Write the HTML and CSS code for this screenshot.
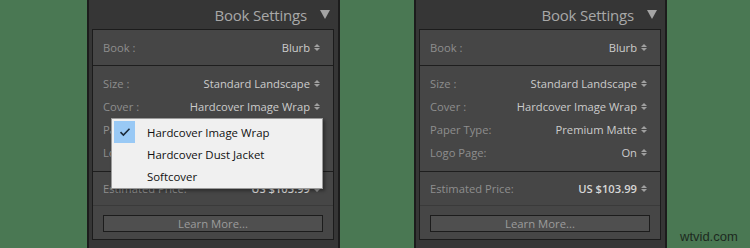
FILE: index.html
```html
<!DOCTYPE html>
<html lang="en">
<head>
  <meta charset="UTF-8" />
  <title>Book Settings</title>
  <link rel="stylesheet" href="styles.css">
</head>
<body>

<div class="stage">
  <section class="panel">
    <div class="head">
      <span class="title">Book Settings</span>
      <span class="tri"></span>
    </div>
    <div class="box">
      <div class="group first">
        <div class="row"><span class="label">Book :</span><span class="value">Blurb<i class="updown"></i></span></div>
      </div>
      <div class="group mid">
        <div class="row"><span class="label">Size :</span><span class="value">Standard Landscape<i class="updown"></i></span></div>
        <div class="row"><span class="label">Cover :</span><span class="value">Hardcover Image Wrap<i class="updown"></i></span></div>
        <div class="row"><span class="label">Paper Type:</span><span class="value">Premium Matte<i class="updown"></i></span></div>
        <div class="row"><span class="label">Logo Page:</span><span class="value">On<i class="updown"></i></span></div>
      </div>
      <div class="group price">
        <div class="row"><span class="label">Estimated Price:</span><span class="value strong">US $103.99<i class="updown"></i></span></div>
      </div>
      <div class="learn"><button>Learn More...</button></div>
    </div>

    <ul class="menu">
      <li class="checked"><span class="check"><svg width="12" height="10" viewBox="0 0 12 10"><path d="M1.5 5.2 L4.4 8 L10.5 1.8" fill="none" stroke="#1b2a3a" stroke-width="1.6"/></svg></span>Hardcover Image Wrap</li>
      <li><span class="check"></span>Hardcover Dust Jacket</li>
      <li><span class="check"></span>Softcover</li>
    </ul>
  </section>

  <section class="panel">
    <div class="head">
      <span class="title">Book Settings</span>
      <span class="tri"></span>
    </div>
    <div class="box">
      <div class="group first">
        <div class="row"><span class="label">Book :</span><span class="value">Blurb<i class="updown"></i></span></div>
      </div>
      <div class="group mid">
        <div class="row"><span class="label">Size :</span><span class="value">Standard Landscape<i class="updown"></i></span></div>
        <div class="row"><span class="label">Cover :</span><span class="value">Hardcover Image Wrap<i class="updown"></i></span></div>
        <div class="row"><span class="label">Paper Type:</span><span class="value">Premium Matte<i class="updown"></i></span></div>
        <div class="row"><span class="label">Logo Page:</span><span class="value">On<i class="updown"></i></span></div>
      </div>
      <div class="group price">
        <div class="row"><span class="label">Estimated Price:</span><span class="value strong">US $103.99<i class="updown"></i></span></div>
      </div>
      <div class="learn"><button>Learn More...</button></div>
    </div>
  </section>
</div>

<div class="mark">wtvid.com</div>

</body>
</html>
```

FILE: styles.css
```css
* {
  box-sizing: border-box;
}

body {
  margin: 0;
  width: 750px;
  height: 248px;
  overflow: hidden;
  background: #4a7853;
  font-family: 'Open Sans', 'Noto Sans', sans-serif;
  position: relative;
}

.stage {
  display: flex;
  gap: 74px;
  padding-left: 87px;
}

.panel {
  position: relative;
  width: 253px;
  height: 248px;
  background: #363636;
  border-left: 2px solid #1c1c1c;
  border-right: 2px solid #1c1c1c;
  padding: 0 4px 0 3px;
}

.head {
  height: 29px;
  display: flex;
  justify-content: flex-end;
  align-items: center;
  padding-right: 4px;
}

.title {
  font-size: 15px;
  color: #a8a8a8;
  letter-spacing: -0.2px;
}

.tri {
  width: 0;
  height: 0;
  margin-left: 13px;
  border-left: 5px solid transparent;
  border-right: 5px solid transparent;
  border-top: 9px solid #a4a4a4;
}

.box {
  background: #464646;
  border: 1px solid #1c1c1c;
}

.group {
  border-bottom: 1px solid #1e1e1e;
}

.group.first {
  height: 36px;
  padding-top: 6px;
}

.group.mid {
  height: 106px;
  padding-top: 6px;
}

.group.price {
  height: 34px;
  padding-top: 5px;
  border-bottom-color: #3a3a3a;
}

.row {
  height: 23px;
  display: flex;
  justify-content: space-between;
  align-items: center;
  padding: 0 13px 0 10px;
  font-size: 11.2px;
}

.label {
  color: #8e8e8e;
}

.value {
  color: #cccccc;
  display: flex;
  align-items: center;
}

.value.strong {
  color: #d6d6d6;
  font-weight: 600;
}

.updown {
  display: inline-flex;
  flex-direction: column;
  gap: 1px;
  margin-left: 4px;
}

.updown::before,
.updown::after {
  content: "";
  border-left: 3px solid transparent;
  border-right: 3px solid transparent;
}

.updown::before {
  border-bottom: 3px solid #a0a0a0;
}

.updown::after {
  border-top: 3px solid #a0a0a0;
}

.learn {
  padding: 9px 10px 7px;
}

.learn button {
  display: block;
  width: 100%;
  height: 17px;
  padding: 0;
  background: #4f4f4f;
  border: 1px solid #1c1c1c;
  color: #9c9c9c;
  font-family: inherit;
  font-size: 11.3px;
  line-height: 15px;
}

.menu {
  position: absolute;
  left: 22px;
  top: 118px;
  width: 212px;
  margin: 0;
  padding: 2px 0 1px 2px;
  list-style: none;
  background: #f0f0f0;
  border: 1px solid #9a9a9a;
  box-shadow: 2px 2px 3px rgba(0, 0, 0, 0.35);
}

.menu li {
  height: 22px;
  display: flex;
  align-items: center;
  font-size: 11.4px;
  color: #111;
}

.check {
  width: 21px;
  height: 22px;
  margin-right: 12px;
  display: flex;
  align-items: center;
  justify-content: center;
}

.menu li.checked .check {
  background: #99c9f5;
}

.mark {
  position: absolute;
  left: 680px;
  top: 229px;
  font-family: 'Liberation Sans', sans-serif;
  font-size: 13px;
  color: #1d2a1f;
}
```
